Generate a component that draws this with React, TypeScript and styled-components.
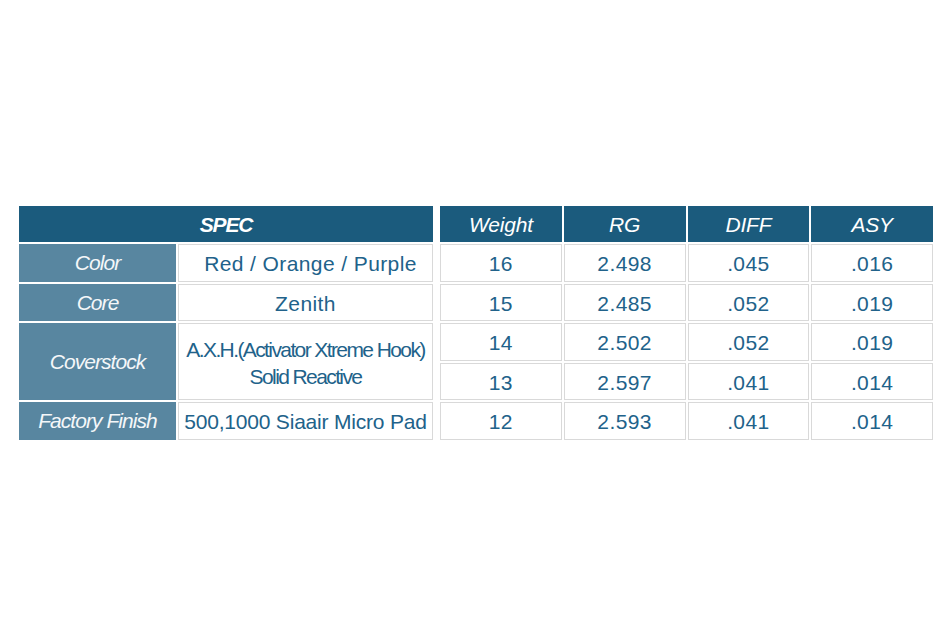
import React from "react";
import styled, { createGlobalStyle } from "styled-components";

const Global = createGlobalStyle`
  html, body { margin: 0; padding: 0; background: #ffffff; }
  body { font-family: "Liberation Sans", Arial, sans-serif; }
`;

const Page = styled.div`
  width: 949px;
  height: 623px;
  box-sizing: border-box;
  padding: 206px 0 0 19px;
  display: flex;
  gap: 7px;
  align-items: flex-start;
`;

const Grid = styled.div<{ $cols: string }>`
  display: grid;
  grid-template-columns: ${(p) => p.$cols};
  grid-template-rows: 36px repeat(5, 37.5px);
  gap: 2px;
`;

const Head = styled.div<{ $span?: number; $bold?: boolean }>`
  grid-column: span ${(p) => p.$span ?? 1};
  background: #1b5b7d;
  color: #ffffff;
  display: flex;
  align-items: center;
  justify-content: center;
  font-style: italic;
  font-weight: ${(p) => (p.$bold ? 700 : 400)};
  font-size: 21px;
  letter-spacing: ${(p) => (p.$bold ? "-1.2px" : "-0.2px")};
  padding-top: 1px;
`;

const Label = styled.div<{ $rows?: number }>`
  grid-row: span ${(p) => p.$rows ?? 1};
  background: #5886a0;
  color: #f4f7f9;
  display: flex;
  align-items: center;
  justify-content: center;
  font-style: italic;
  font-size: 21px;
  letter-spacing: -0.95px;
  padding-top: 1px;
`;

const Cell = styled.div<{ $rows?: number; $spacing?: number; $shift?: number }>`
  grid-row: span ${(p) => p.$rows ?? 1};
  background: #ffffff;
  border: 1px solid #d9d9d9;
  color: #21628a;
  display: flex;
  flex-direction: column;
  align-items: center;
  justify-content: center;
  text-align: center;
  white-space: nowrap;
  font-size: 21px;
  line-height: 27px;
  letter-spacing: ${(p) => p.$spacing ?? 0.4}px;
  padding: 2px 0 0 ${(p) => p.$shift ?? 0}px;
`;

const rows = [
  ["16", "2.498", ".045", ".016"],
  ["15", "2.485", ".052", ".019"],
  ["14", "2.502", ".052", ".019"],
  ["13", "2.597", ".041", ".014"],
  ["12", "2.593", ".041", ".014"],
];

export default function App() {
  return (
    <>
      <Global />
      <Page>
        <Grid $cols="157px 255px">
          <Head $span={2} $bold>SPEC</Head>
          <Label>Color</Label>
          <Cell $shift={10}>Red / Orange / Purple</Cell>
          <Label>Core</Label>
          <Cell>Zenith</Cell>
          <Label $rows={2}>Coverstock</Label>
          <Cell $rows={2} $spacing={-1.6}>
            <span>A.X.H.(Activator Xtreme Hook)</span>
            <span>Solid Reactive</span>
          </Cell>
          <Label>Factory Finish</Label>
          <Cell $spacing={-0.2}>500,1000 Siaair Micro Pad</Cell>
        </Grid>
        <Grid $cols="repeat(4, 121.75px)">
          <Head>Weight</Head>
          <Head>RG</Head>
          <Head>DIFF</Head>
          <Head>ASY</Head>
          {rows.flatMap((r, i) => r.map((v, j) => <Cell key={`${i}-${j}`}>{v}</Cell>))}
        </Grid>
      </Page>
    </>
  );
}
